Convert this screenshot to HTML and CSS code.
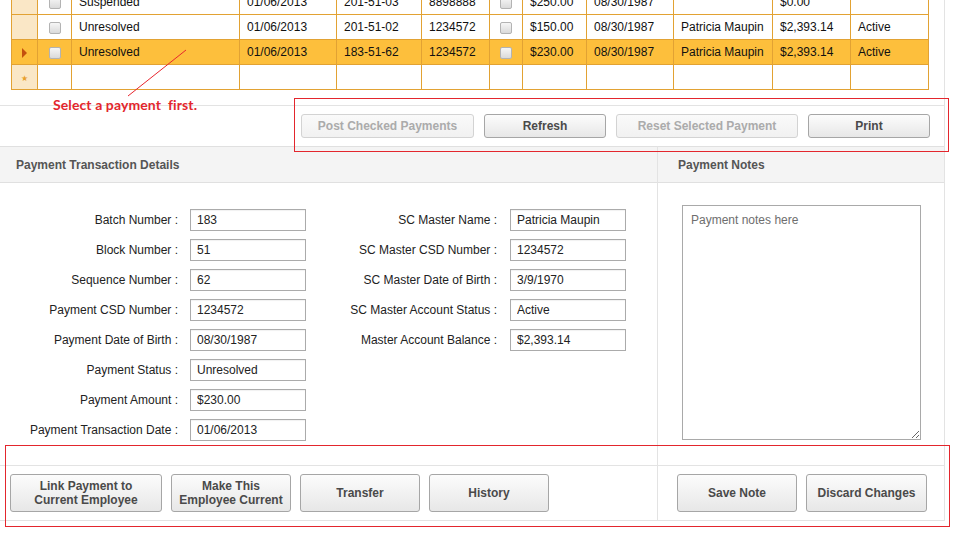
FILE: index.html
```html
<!DOCTYPE html>
<html>
<head>
<meta charset="utf-8">
<title>Payment Transactions</title>
<link rel="stylesheet" href="styles.css">
</head>
<body>
<div class="page">
  <div class="grid-area">
    <table class="grid">
      <colgroup>
        <col class="c-rh"><col class="c-cb"><col class="c-status"><col class="c-date"><col class="c-batch"><col class="c-csd"><col class="c-cb2"><col class="c-amt"><col class="c-dob"><col class="c-name"><col class="c-bal"><col class="c-acct">
      </colgroup>
      <tr>
        <td class="rh"></td><td class="cbc"><span class="cb"></span></td><td>Suspended</td><td>01/06/2013</td><td>201-51-03</td><td>8898888</td><td class="cbc"><span class="cb"></span></td><td>$250.00</td><td>08/30/1987</td><td></td><td>$0.00</td><td></td>
      </tr>
      <tr>
        <td class="rh"></td><td class="cbc"><span class="cb"></span></td><td>Unresolved</td><td>01/06/2013</td><td>201-51-02</td><td>1234572</td><td class="cbc"><span class="cb"></span></td><td>$150.00</td><td>08/30/1987</td><td>Patricia Maupin</td><td>$2,393.14</td><td>Active</td>
      </tr>
      <tr class="selected">
        <td class="rh"><span class="arrow"></span></td><td class="cbc"><span class="cb"></span></td><td>Unresolved</td><td>01/06/2013</td><td>183-51-62</td><td>1234572</td><td class="cbc"><span class="cb"></span></td><td>$230.00</td><td>08/30/1987</td><td>Patricia Maupin</td><td>$2,393.14</td><td>Active</td>
      </tr>
      <tr>
        <td class="rh"><span class="star">★</span></td><td></td><td></td><td></td><td></td><td></td><td></td><td></td><td></td><td></td><td></td><td></td>
      </tr>
    </table>
  </div>

  <div class="toolbar">
    <button class="btn btn-post" disabled>Post Checked Payments</button>
    <button class="btn btn-refresh">Refresh</button>
    <button class="btn btn-reset" disabled>Reset Selected Payment</button>
    <button class="btn btn-print">Print</button>
  </div>

  <div class="lower">
    <div class="head">Payment Transaction Details</div>
    <div class="head side">Payment Notes</div>

    <div class="details">
      <div class="fields fields-left">
        <label>Batch Number :</label><input class="field" value="183" readonly>
        <label>Block Number :</label><input class="field" value="51" readonly>
        <label>Sequence Number :</label><input class="field" value="62" readonly>
        <label>Payment CSD Number :</label><input class="field" value="1234572" readonly>
        <label>Payment Date of Birth :</label><input class="field" value="08/30/1987" readonly>
        <label>Payment Status :</label><input class="field" value="Unresolved" readonly>
        <label>Payment Amount :</label><input class="field" value="$230.00" readonly>
        <label>Payment Transaction Date :</label><input class="field" value="01/06/2013" readonly>
      </div>
      <div class="fields fields-right">
        <label>SC Master Name :</label><input class="field" value="Patricia Maupin" readonly>
        <label>SC Master CSD Number :</label><input class="field" value="1234572" readonly>
        <label>SC Master Date of Birth :</label><input class="field" value="3/9/1970" readonly>
        <label>SC Master Account Status :</label><input class="field" value="Active" readonly>
        <label>Master Account Balance :</label><input class="field" value="$2,393.14" readonly>
      </div>
    </div>
    <div class="notes side">
      <textarea class="notes-box" placeholder="Payment notes here"></textarea>
    </div>

    <div class="actions">
      <button class="btn tall btn-link">Link Payment to<br>Current Employee</button>
      <button class="btn tall btn-std">Make This<br>Employee Current</button>
      <button class="btn tall btn-std">Transfer</button>
      <button class="btn tall btn-std">History</button>
    </div>
    <div class="actions side actions-notes">
      <button class="btn tall btn-std">Save Note</button>
      <button class="btn tall btn-discard">Discard Changes</button>
    </div>
  </div>

  <svg class="callout-line" width="200" height="100" viewBox="0 0 200 100">
    <line x1="186" y1="50" x2="128" y2="96" stroke="#e8262e" stroke-width="1"/>
  </svg>
  <div class="callout">Select a payment&nbsp; first.</div>
  <div class="mark mark-toolbar"></div>
  <div class="mark mark-actions"></div>
</div>
</body>
</html>
```

FILE: styles.css
```css
html, body {
  margin: 0;
  padding: 0;
  background: #fff;
}

body {
  font-family: "Liberation Sans", Arial, sans-serif;
  font-size: 12px;
  color: #222;
  min-height: 540px;
}

.page {
  position: relative;
  width: 945px;
  box-sizing: border-box;
  border-right: 1px solid #e3e3e3;
}

/* ---------- grid ---------- */
.grid-area {
  display: flow-root;
  padding: 0 0 15px 11px;
}

.grid {
  margin-top: -11px;
  border-collapse: collapse;
  table-layout: fixed;
  width: 918px;
  color: #111;
}

.c-rh { width: 26px; }
.c-cb { width: 34px; }
.c-status { width: 168px; }
.c-date { width: 97px; }
.c-batch { width: 85px; }
.c-csd { width: 68px; }
.c-cb2 { width: 33px; }
.c-amt { width: 64px; }
.c-dob { width: 87px; }
.c-name { width: 99px; }
.c-bal { width: 78px; }
.c-acct { width: 78px; }

.grid td {
  border: 1px solid #e2a233;
  height: 24px;
  padding: 0 0 0 7px;
  white-space: nowrap;
  overflow: hidden;
}

.grid td.rh {
  background: #fae7c6;
  padding: 0;
  text-align: center;
}

.grid td.cbc {
  padding: 0;
  text-align: center;
}

.grid tr.selected td {
  background: #fdbf3c;
}

.cb {
  display: inline-block;
  width: 12px;
  height: 12px;
  box-sizing: border-box;
  border: 1px solid #b3b3b3;
  border-radius: 2px;
  background: linear-gradient(#f6f6f6, #dadada);
  vertical-align: middle;
}

.arrow {
  display: inline-block;
  width: 0;
  height: 0;
  border-left: 5px solid #c4500e;
  border-top: 5px solid transparent;
  border-bottom: 5px solid transparent;
  vertical-align: middle;
}

.star {
  font-size: 8px;
  color: #e8a02c;
  font-family: "DejaVu Sans", sans-serif;
}

/* ---------- buttons ---------- */
.btn {
  font-family: "Liberation Sans", Arial, sans-serif;
  font-size: 12px;
  font-weight: bold;
  color: #4a4a4a;
  height: 24px;
  padding: 0;
  border: 1px solid #a6a6a6;
  border-radius: 3px;
  background: linear-gradient(#fcfcfc, #e7e7e7);
  line-height: 14px;
}

.btn:disabled {
  color: #ababab;
  border-color: #d3d3d3;
  background: linear-gradient(#fafafa, #f1f1f1);
}

.btn.tall { height: 38px; }

.btn-post { width: 173px; }
.btn-refresh { width: 122px; }
.btn-reset { width: 182px; }
.btn-print { width: 122px; }
.btn-link { width: 152px; }
.btn-std { width: 120px; }
.btn-discard { width: 121px; }

.toolbar {
  display: flex;
  justify-content: flex-end;
  gap: 10px;
  padding: 8px 14px 8px 0;
  border-top: 1px solid #e3e3e3;
}

/* ---------- lower panels ---------- */
.lower {
  display: grid;
  grid-template-columns: 657px 1fr;
  grid-template-rows: 37px 282px 56px;
}

.side {
  border-left: 1px solid #e3e3e3;
}

.head {
  box-sizing: border-box;
  display: flex;
  align-items: center;
  padding-left: 16px;
  background: #f4f4f4;
  border-top: 1px solid #e0e0e0;
  border-bottom: 1px solid #e0e0e0;
  font-weight: bold;
  color: #555;
}

.head.side {
  padding-left: 20px;
}

.details {
  display: flex;
  align-items: flex-start;
  padding-top: 26px;
}

.fields {
  display: grid;
  grid-auto-rows: 22px;
  row-gap: 8px;
  align-items: center;
}

.fields-left {
  grid-template-columns: 178px 116px;
  column-gap: 12px;
}

.fields-right {
  grid-template-columns: 191px 116px;
  column-gap: 13px;
}

.fields label {
  text-align: right;
  white-space: nowrap;
  color: #222;
}

.field {
  box-sizing: border-box;
  width: 116px;
  height: 22px;
  margin: 0;
  padding: 0 6px;
  border: 1px solid #ababab;
  box-shadow: inset 0 1px 1px rgba(0, 0, 0, 0.06);
  font-family: "Liberation Sans", Arial, sans-serif;
  font-size: 12px;
  color: #222;
  background: #fff;
  outline: none;
}

.notes {
  padding: 22px 0 0 24px;
}

.notes-box {
  box-sizing: border-box;
  display: block;
  width: 239px;
  height: 235px;
  margin: 0;
  padding: 7px 8px;
  border: 1px solid #a9a9a9;
  font-family: "Liberation Sans", Arial, sans-serif;
  font-size: 12px;
  color: #222;
  resize: both;
  outline: none;
}

.notes-box::placeholder {
  color: #6e6e6e;
}

.actions {
  box-sizing: border-box;
  display: flex;
  gap: 9px;
  padding: 8px 0 0 10px;
  border-top: 1px solid #e3e3e3;
  border-bottom: 1px solid #e3e3e3;
}

.actions-notes {
  padding-left: 19px;
}

/* ---------- annotations ---------- */
.callout-line {
  position: absolute;
  left: 0;
  top: 0;
}

.callout {
  position: absolute;
  left: 53px;
  top: 96px;
  font-family: Lato, "Open Sans", sans-serif;
  font-weight: bold;
  font-size: 14px;
  letter-spacing: 0.1px;
  color: #e3262d;
  white-space: nowrap;
}

.mark {
  position: absolute;
  box-sizing: border-box;
  border: 1px solid #e3262d;
}

.mark-toolbar {
  left: 294px;
  top: 98px;
  width: 655px;
  height: 54px;
}

.mark-actions {
  left: 5px;
  top: 445px;
  width: 945px;
  height: 82px;
}
```
